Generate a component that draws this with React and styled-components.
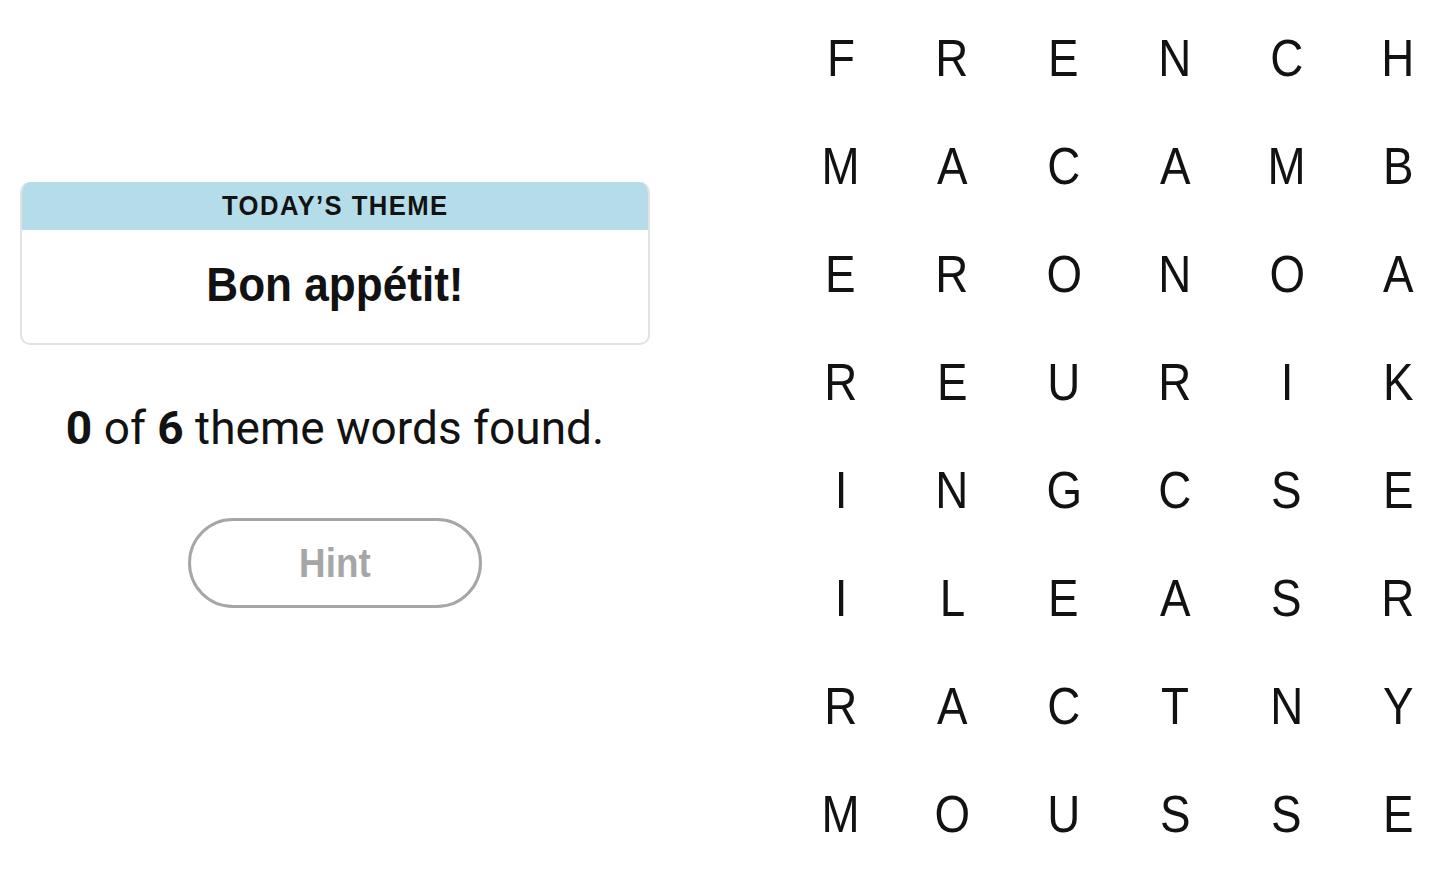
import React from 'react';
import styled, { createGlobalStyle } from 'styled-components';

const GlobalStyle = createGlobalStyle`
  html, body {
    margin: 0;
    padding: 0;
    background: #fff;
  }
  body {
    font-family: 'Liberation Sans', Roboto, sans-serif;
    color: #121212;
  }
`;

const letters = [
  'FRENCH',
  'MACAMB',
  'ERONOA',
  'REURIK',
  'INGCSE',
  'ILEASR',
  'RACTNY',
  'MOUSSE',
];

export default function App() {
  return (
    <>
      <GlobalStyle />
      <Page>
        <Sidebar>
          <ThemeCard>
            <ThemeLabel>
              <Narrow $scale={0.95}>Today’s Theme</Narrow>
            </ThemeLabel>
            <ThemeTitle>
              <Narrow $scale={0.9}>Bon appétit!</Narrow>
            </ThemeTitle>
          </ThemeCard>
          <Progress>
            <b>0</b> of <b>6</b> theme words found.
          </Progress>
          <HintButton disabled>
            <Narrow $scale={0.92}>Hint</Narrow>
          </HintButton>
        </Sidebar>
        <Board>
          {letters.map((row, r) =>
            row.split('').map((ch, c) => (
              <Cell key={`${r}-${c}`}>
                <Narrow $scale={0.88}>{ch}</Narrow>
              </Cell>
            ))
          )}
        </Board>
      </Page>
    </>
  );
}

// condensed look for the headline face
const Narrow = styled.span`
  display: inline-block;
  transform: scaleX(${p => p.$scale});
`;

const Page = styled.div`
  display: flex;
  width: 1454px;
  height: 874px;
  box-sizing: border-box;
  padding-top: 4px;
`;

const Sidebar = styled.div`
  width: 670px;
  box-sizing: border-box;
  padding: 178px 20px 0;
  display: flex;
  flex-direction: column;
  align-items: center;
`;

const ThemeCard = styled.div`
  width: 100%;
  border: 2px solid #e2e2e2;
  border-top: none;
  border-radius: 10px;
  overflow: hidden;
  box-sizing: border-box;
`;

const ThemeLabel = styled.div`
  background: #b5dde9;
  height: 48px;
  display: flex;
  align-items: center;
  justify-content: center;
  text-transform: uppercase;
  font-size: 27px;
  font-weight: 700;
  letter-spacing: 1.5px;
  color: #121212;
  margin: 0 -2px;
`;

const ThemeTitle = styled.div`
  height: 113px;
  padding-bottom: 6px;
  box-sizing: border-box;
  display: flex;
  align-items: center;
  justify-content: center;
  font-size: 49px;
  font-weight: 700;
  color: #121212;
`;

const Progress = styled.p`
  margin: 56px 0 0;
  font-family: Roboto, 'Liberation Sans', sans-serif;
  font-size: 46px;
  line-height: 54px;
  color: #121212;

  b {
    font-weight: 700;
  }
`;

const HintButton = styled.button`
  margin-top: 63px;
  width: 294px;
  height: 90px;
  border-radius: 45px;
  border: 3px solid #a6a6a6;
  background: #fff;
  color: #a6a6a6;
  font-family: 'Liberation Sans', sans-serif;
  font-size: 40px;
  font-weight: 700;
  padding: 0;
`;

const Board = styled.div`
  margin-left: 115px;
  flex: 1;
  display: grid;
  grid-template-columns: repeat(6, 1fr);
  grid-template-rows: repeat(8, 108px);
`;

const Cell = styled.div`
  display: flex;
  align-items: center;
  justify-content: center;
  font-size: 52px;
  color: #121212;
`;
